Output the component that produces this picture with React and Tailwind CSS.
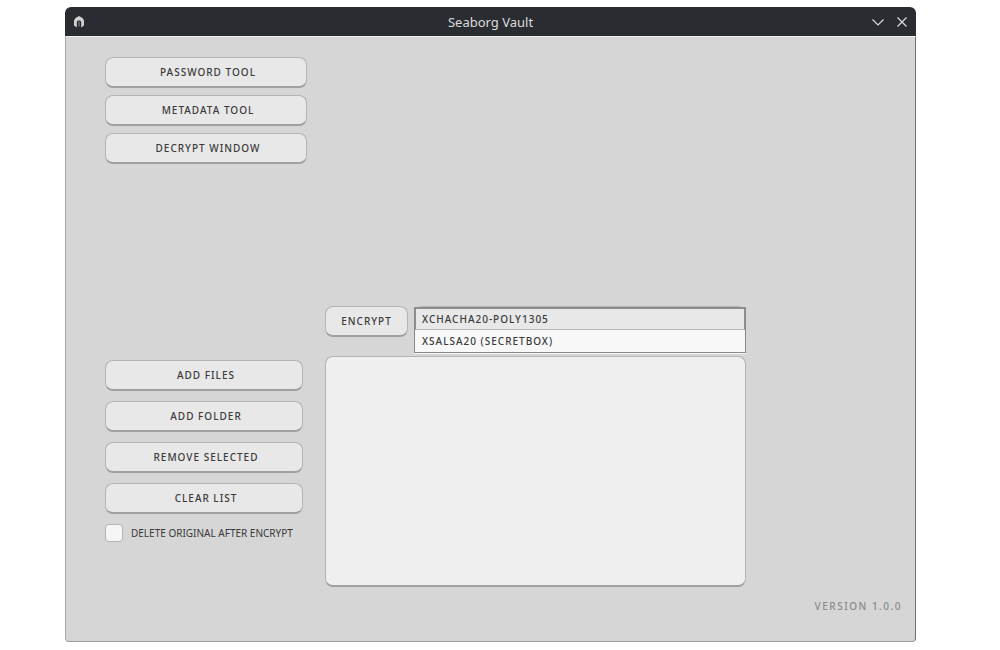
import React, { useState } from 'react';

const CIPHERS = ['XCHACHA20-POLY1305', 'XSALSA20 (SECRETBOX)'];

const ToolButton = ({ children, className = '' }) => (
  <button
    type="button"
    className={`h-[31px] rounded-lg border border-b-2 border-[#b4b4b4] border-b-[#a0a0a0] bg-[#e8e8e8] text-[10px] leading-4 font-medium tracking-widest text-[#3a3a3a] hover:bg-[#f0f0f0] ${className}`}
  >
    {children}
  </button>
);

const TitleBar = () => (
  <header className="flex h-[29px] shrink-0 items-center rounded-t-md bg-[#292c30] px-2 text-[#dcdcdc]">
    <div className="flex flex-1 items-center">
      <svg width="12" height="14" viewBox="0 0 12 14" aria-hidden="true">
        <path d="M6 1 9.500 3 11 5.500V10.500L8.200 12.500V7L7.200 5.500H4.800L3.800 7V12.500L1 10.500V5.500L2.500 3z" fill="#d2d2d2" />
        <path d="M6 6.500v5" stroke="#8c8c8c" strokeWidth="1" />
      </svg>
    </div>
    <h1 className="text-[13px] leading-5">Seaborg Vault</h1>
    <div className="flex flex-1 items-center justify-end gap-3">
      <button type="button" aria-label="Minimize">
        <svg width="12" height="12" viewBox="0 0 12 12" fill="none" stroke="currentColor" strokeWidth="1.2">
          <path d="M0.500 3.500 6 9l5.500-5.500" />
        </svg>
      </button>
      <button type="button" aria-label="Close">
        <svg width="12" height="12" viewBox="0 0 12 12" fill="none" stroke="currentColor" strokeWidth="1.2">
          <path d="m1.500 1.500 9 9M10.500 1.500l-9 9" />
        </svg>
      </button>
    </div>
  </header>
);

const CipherSelect = () => {
  const [cipher, setCipher] = useState(CIPHERS[0]);
  const [open, setOpen] = useState(true);

  const pick = (name) => {
    setCipher(name);
    setOpen(false);
  };

  return (
    <div className="relative h-[31px] flex-1">
      <select
        aria-label="Cipher"
        value={cipher}
        onChange={(e) => setCipher(e.target.value)}
        className="h-[31px] w-full appearance-none rounded-lg border border-b-2 border-[#b4b4b4] bg-[#e8e8e8] px-2 text-[10px] font-medium tracking-widest"
      >
        {CIPHERS.map((name) => <option key={name}>{name}</option>)}
      </select>
      {open && (
        <ul role="listbox" aria-label="Cipher options" className="absolute inset-x-0 top-px z-10 border border-[#8a8a8a] bg-[#f8f8f8] shadow-[0_1px_0_#f4f4f4]">
          {CIPHERS.map((name) => (
            <li
              key={name}
              role="option"
              aria-selected={name === cipher}
              onClick={() => pick(name)}
              className="h-[22px] border border-transparent px-1.5 text-[10px] leading-5 font-medium tracking-widest text-[#3a3a3a] aria-selected:border-[#8f8f8f] aria-selected:border-b-[#b8b8b8] aria-selected:bg-[#e8e8e8]"
            >
              {name}
            </li>
          ))}
        </ul>
      )}
    </div>
  );
};

export default function App() {
  return (
    <div className="min-h-screen bg-white pt-[7px] pr-[84px] pb-2 pl-[65px] font-['Noto_Sans',sans-serif]">
      <div className="flex flex-col">
        <TitleBar />
        <main className="rounded-b-sm border border-t-[#f0f0f0] border-r-[#6e6e6e] border-b-[#9c9c9c] border-l-[#a8a8a8] bg-[#d6d6d6] pt-5 pb-[27px]">
          <nav className="ml-[39px] flex w-[202px] flex-col gap-[7px]">
            <ToolButton className="pl-1">PASSWORD TOOL</ToolButton>
            <ToolButton className="pl-1">METADATA TOOL</ToolButton>
            <ToolButton className="pl-1">DECRYPT WINDOW</ToolButton>
          </nav>

          <div className="mt-[142px] mr-[169px] ml-[39px] flex gap-[22px]">
            <div className="flex w-[198px] shrink-0 flex-col gap-2.5 pt-[54px]">
              <ToolButton className="pl-1">ADD FILES</ToolButton>
              <ToolButton className="pl-1">ADD FOLDER</ToolButton>
              <ToolButton className="pl-1">REMOVE SELECTED</ToolButton>
              <ToolButton className="pl-1">CLEAR LIST</ToolButton>
              <label className="flex items-center gap-2 text-[10px] leading-4 whitespace-nowrap text-[#3a3a3a]">
                <input type="checkbox" className="size-[18px] shrink-0 appearance-none rounded-sm border border-[#b4b4b4] bg-[#f5f5f5] checked:bg-[#8a8a8a]" />
                DELETE ORIGINAL AFTER ENCRYPT
              </label>
            </div>

            <div className="flex flex-1 flex-col gap-[19px]">
              <div className="flex gap-1.5">
                <ToolButton className="w-[83px]">ENCRYPT</ToolButton>
                <CipherSelect />
              </div>
              <div className="h-[231px] rounded-lg border border-b-2 border-[#b4b4b4] border-b-[#a0a0a0] bg-[#efefef]" aria-label="Files to encrypt" role="list" />
            </div>
          </div>

          <p className="mt-[11px] pr-[13px] text-right text-[10px] leading-4 font-medium tracking-[0.15em] text-[#8a8a8a]">VERSION 1.0.0</p>
        </main>
      </div>
    </div>
  );
}
